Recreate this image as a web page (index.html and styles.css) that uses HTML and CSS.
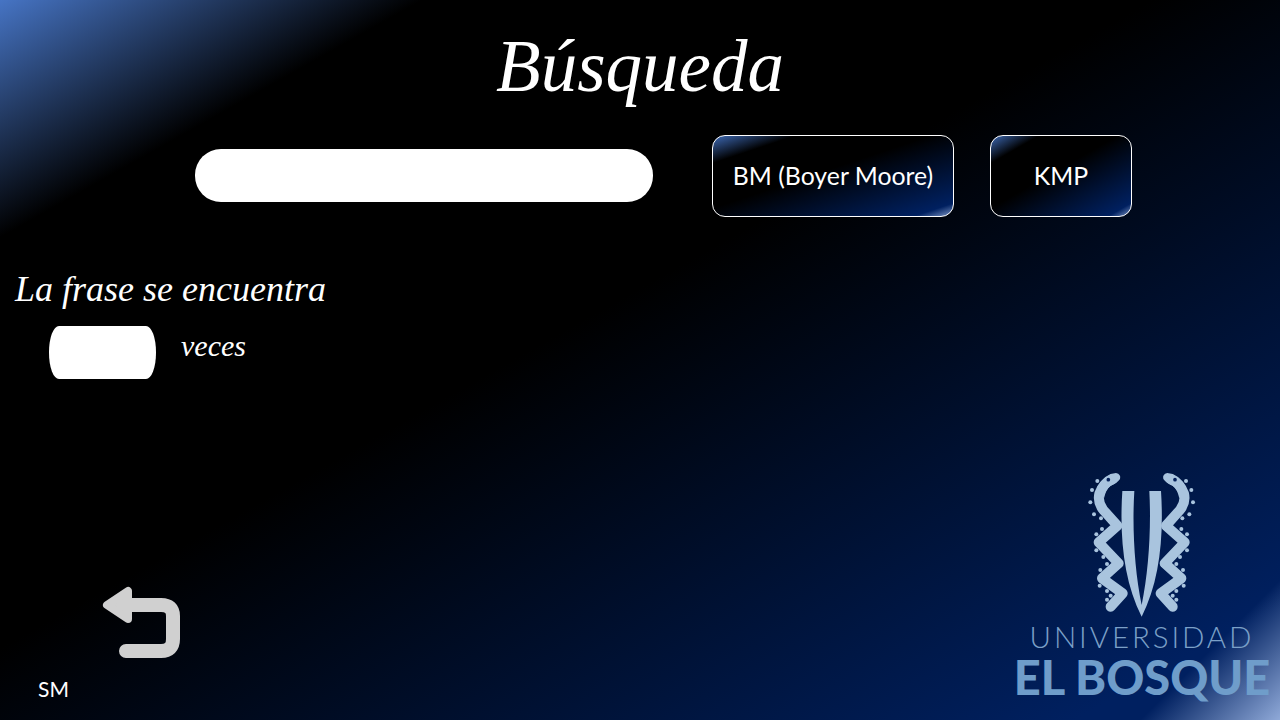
FILE: index.html
```html
<!DOCTYPE html>
<html lang="es">
<head>
<meta charset="utf-8">
<title>Búsqueda</title>
<link rel="stylesheet" href="styles.css">
</head>
<body>
<main class="slide">
  <h1 class="title">Búsqueda</h1>
  <section class="search-row">
    <input class="search-input" type="text" aria-label="Frase">
    <button class="algo algo-bm" type="button">BM (Boyer Moore)</button>
    <button class="algo algo-kmp" type="button">KMP</button>
  </section>
  <section class="result">
    <p class="result-line">La frase se encuentra</p>
    <div class="count-row">
      <div class="count-box"></div>
      <span class="count-label">veces</span>
    </div>
  </section>
  <footer class="bottom">
    <div class="back">
      <svg class="back-icon" viewBox="0 0 80 74" aria-hidden="true">
        <path class="back-stroke" d="M20 19H60Q72 19 72 30V53Q72 65 60 65H25"/>
        <path class="back-head" d="M6 19L27 5V33Z"/>
      </svg>
      <span class="initials">SM</span>
    </div>
    <div class="logo">
      <svg class="emblem" viewBox="0 0 375 465" aria-hidden="true">
        <defs>
          <g id="snake">
            <path class="snake-body" d="M98 42Q68 56 58 86Q52 112 70 135L112 182L56 232L116 295L66 340L128 385L92 425"/>
            <path class="snake-head" d="M52 66Q74 26 108 24Q124 28 120 42Q110 56 92 62Q78 72 72 100Z"/>
            <circle class="snake-eye" cx="85" cy="44" r="5.5"/>
            <g class="snake-dots">
              <circle cx="52" cy="48" r="6"/><circle cx="36" cy="75" r="6"/><circle cx="31" cy="112" r="6"/><circle cx="42" cy="148" r="6"/>
              <circle cx="63" cy="160" r="6"/><circle cx="66" cy="192" r="6"/><circle cx="49" cy="208" r="6"/>
              <circle cx="49" cy="256" r="6"/><circle cx="70" cy="276" r="6"/><circle cx="81" cy="297" r="6"/><circle cx="61" cy="315" r="6"/>
              <circle cx="59" cy="362" r="6"/><circle cx="81" cy="378" r="6"/><circle cx="92" cy="392" r="6"/><circle cx="81" cy="404" r="6"/>
            </g>
          </g>
        </defs>
        <use href="#snake"/>
        <use href="#snake" transform="matrix(-1 0 0 1 370 0)"/>
        <path class="emblem-v" d="M127 78H163C156 190 164 320 185 420C206 320 214 190 208 78H243C252 220 238 350 185 455C132 350 118 220 127 78Z"/>
      </svg>
      <div class="logo-top">UNIVERSIDAD</div>
      <div class="logo-bottom">EL BOSQUE</div>
    </div>
  </footer>
</main>
</body>
</html>
```
FILE: styles.css
```css
* { box-sizing: border-box; }
html, body { margin: 0; height: 100%; background: #000; }
.slide {
  width: 1280px;
  height: 720px;
  overflow: hidden;
  display: flex;
  flex-direction: column;
  color: #fff;
  font-family: Lato, "Liberation Sans", sans-serif;
  background:
    linear-gradient(135deg, rgba(143, 169, 216, 0) 93%, #8fa9d8 100%),
    linear-gradient(to bottom right, #4674c4 0%, #000 16.5%, #000 45%, #002060 92%, #002060 100%);
}
.title {
  margin: 0;
  height: 135px;
  padding-top: 22px;
  text-align: center;
  font: italic 400 73px/90px "Liberation Serif", serif;
}
.search-row {
  display: flex;
  align-items: center;
  height: 82px;
  padding-left: 195px;
}
.search-input {
  width: 458px;
  height: 53px;
  border: 0;
  border-radius: 26px;
  background: #fff;
  margin: 0 59px 2px 0;
}
.algo {
  height: 82px;
  color: #fff;
  font: 400 24.8px/1 Lato, sans-serif;
  border: 1px solid #fff;
  border-radius: 13px;
  background: linear-gradient(to bottom right, #3d69b4 0%, #000 17%, #000 45%, #002060 92%, #7d97c8 100%);
}
.algo-bm { width: 242px; margin-right: 36px; }
.algo-kmp { width: 142px; }
.result {
  padding-top: 48px;
}
.result-line {
  margin: 0 0 0 15px;
  font: italic 400 36px/48px "Liberation Serif", serif;
}
.count-row {
  display: flex;
  align-items: center;
  padding: 13px 0 0 49px;
}
.count-box {
  width: 107px;
  height: 53px;
  background: #fff;
  border-radius: 10px / 26px;
}
.count-label {
  margin: 0 0 13px 25px;
  font: italic 400 30px/40px "Liberation Serif", serif;
}
.bottom {
  margin-top: auto;
  display: flex;
  justify-content: space-between;
  align-items: flex-end;
}
.back {
  display: flex;
  flex-direction: column;
  padding: 0 0 16px 38px;
}
.back-icon {
  width: 80px;
  height: 74px;
  margin: 0 0 14px 63px;
  fill: none;
}
.back-stroke { stroke: #d0d0d0; stroke-width: 14; stroke-linecap: round; }
.back-head { fill: #d0d0d0; stroke: #d0d0d0; stroke-width: 8; stroke-linejoin: round; }
.initials { font-size: 21px; line-height: 30px; }
.logo {
  width: 266px;
  padding: 0 10px 18px 0;
  display: flex;
  flex-direction: column;
  align-items: center;
}
.emblem { width: 125px; height: 155px; display: block; margin-bottom: 2px; }
.snake-body { fill: none; stroke: #a9c4de; stroke-width: 30; stroke-linejoin: round; stroke-linecap: round; }
.snake-head, .snake-dots, .emblem-v { fill: #a9c4de; }
.snake-eye { fill: #04205a; }
.logo-top {
  font: 300 29.5px/30px Lato, sans-serif;
  letter-spacing: 2.9px;
  color: #7ba0c8;
  white-space: nowrap;
}
.logo-bottom {
  font: 900 47px/50px Lato, sans-serif;
  color: #6f9dca;
  white-space: nowrap;
}
```
